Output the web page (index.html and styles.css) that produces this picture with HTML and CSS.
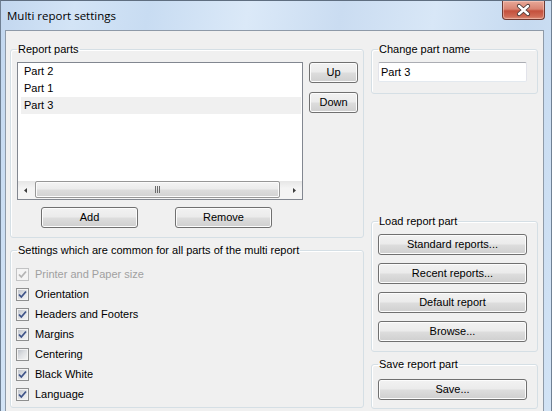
FILE: index.html
```html
<!DOCTYPE html>
<html>
<head>
<meta charset="utf-8">
<title>Multi report settings</title>
<link rel="stylesheet" href="styles.css">
</head>
<body>
<div class="window">
  <div class="titlebar">
    <span class="title">Multi report settings</span>
    <div class="close">
      <svg width="43" height="19" viewBox="0 0 43 19">
        <path d="M17 5 L26 13 M26 5 L17 13" stroke="#4a3a38" stroke-width="4.2" stroke-linecap="round" fill="none"/>
        <path d="M17 5 L26 13 M26 5 L17 13" stroke="#ffffff" stroke-width="2.4" stroke-linecap="round" fill="none"/>
      </svg>
    </div>
  </div>
  <div class="client">
    <div class="col-left">
      <fieldset class="group parts">
        <legend>Report parts</legend>
        <div class="parts-row">
          <div class="listbox">
            <div class="items">
              <div class="item">Part 2</div>
              <div class="item">Part 1</div>
              <div class="item selected">Part 3</div>
            </div>
            <div class="hscroll">
              <div class="arrow">
                <svg width="17" height="17" viewBox="0 0 17 17"><polygon points="9,6 6,8.5 9,11" fill="#3c3c3c"/></svg>
              </div>
              <div class="track">
                <div class="thumb">
                  <svg width="7" height="7" viewBox="0 0 7 7"><path d="M1.5 0 V7 M3.5 0 V7 M5.5 0 V7" stroke="#6b6b6b" stroke-width="1"/></svg>
                </div>
              </div>
              <div class="arrow">
                <svg width="17" height="17" viewBox="0 0 17 17"><polygon points="8,6 11,8.5 8,11" fill="#3c3c3c"/></svg>
              </div>
            </div>
          </div>
          <div class="updown">
            <button class="btn small">Up</button>
            <button class="btn small down">Down</button>
          </div>
        </div>
        <div class="addremove">
          <button class="btn wide">Add</button>
          <button class="btn wide">Remove</button>
        </div>
      </fieldset>

      <fieldset class="group settings">
        <legend>Settings which are common for all parts of the multi report</legend>
        <div class="check disabled">
          <span class="box"><svg width="11" height="11" viewBox="0 0 11 11"><path d="M2 5.5 L4.3 8 L9 2.5" stroke="#b4b4b4" stroke-width="1.8" fill="none"/></svg></span>
          <span class="label">Printer and Paper size</span>
        </div>
        <div class="check">
          <span class="box"><svg width="11" height="11" viewBox="0 0 11 11"><path d="M2 5.5 L4.3 8 L9 2.5" stroke="#3f5488" stroke-width="1.8" fill="none"/></svg></span>
          <span class="label">Orientation</span>
        </div>
        <div class="check">
          <span class="box"><svg width="11" height="11" viewBox="0 0 11 11"><path d="M2 5.5 L4.3 8 L9 2.5" stroke="#3f5488" stroke-width="1.8" fill="none"/></svg></span>
          <span class="label">Headers and Footers</span>
        </div>
        <div class="check">
          <span class="box"><svg width="11" height="11" viewBox="0 0 11 11"><path d="M2 5.5 L4.3 8 L9 2.5" stroke="#3f5488" stroke-width="1.8" fill="none"/></svg></span>
          <span class="label">Margins</span>
        </div>
        <div class="check">
          <span class="box"></span>
          <span class="label">Centering</span>
        </div>
        <div class="check">
          <span class="box"><svg width="11" height="11" viewBox="0 0 11 11"><path d="M2 5.5 L4.3 8 L9 2.5" stroke="#3f5488" stroke-width="1.8" fill="none"/></svg></span>
          <span class="label">Black White</span>
        </div>
        <div class="check">
          <span class="box"><svg width="11" height="11" viewBox="0 0 11 11"><path d="M2 5.5 L4.3 8 L9 2.5" stroke="#3f5488" stroke-width="1.8" fill="none"/></svg></span>
          <span class="label">Language</span>
        </div>
      </fieldset>
    </div>

    <div class="col-right">
      <fieldset class="group rename">
        <legend>Change part name</legend>
        <div class="textbox">Part 3</div>
      </fieldset>

      <fieldset class="group load">
        <legend>Load report part</legend>
        <div class="btn-stack">
          <button class="btn full">Standard reports...</button>
          <button class="btn full">Recent reports...</button>
          <button class="btn full">Default report</button>
          <button class="btn full">Browse...</button>
        </div>
      </fieldset>

      <fieldset class="group save">
        <legend>Save report part</legend>
        <button class="btn full">Save...</button>
      </fieldset>
    </div>
  </div>
</div>
</body>
</html>
```

FILE: styles.css
```css
* {
  box-sizing: border-box;
}

html, body {
  margin: 0;
  padding: 0;
}

body {
  width: 552px;
  height: 411px;
  overflow: hidden;
  background: #ffffff;
  font-family: "Liberation Sans", Arial, sans-serif;
  font-size: 11px;
  color: #000000;
}

.window {
  width: 552px;
  height: 411px;
  border-top: 1px solid #5f6e80;
  border-left: 1px solid #6f8093;
  border-right: 1px solid #6f8093;
  background: linear-gradient(100deg, #c2d7ef 0%, #d3e4f6 12%, #c8dcf2 24%, #dbe9f8 40%, #cadcf1 55%, #d8e7f7 70%, #c6daf0 85%, #d2e3f5 100%);
  display: flex;
  flex-direction: column;
}

.titlebar {
  height: 29px;
  flex: none;
  display: flex;
  align-items: flex-start;
  justify-content: space-between;
  padding: 0 6px;
}

.title {
  font-family: "Open Sans", "Liberation Sans", sans-serif;
  font-size: 11.5px;
  line-height: 16px;
  margin-top: 7px;
  color: #000000;
}

.close {
  width: 43px;
  height: 19px;
  border: 1px solid #6e3a33;
  border-top: none;
  border-radius: 0 0 4px 4px;
  background: linear-gradient(#e8a898 0%, #d98472 45%, #c4503c 55%, #cf6a55 85%, #dd8f78 100%);
  box-shadow: inset 0 0 0 1px rgba(255, 220, 210, 0.45);
  display: flex;
  align-items: center;
  justify-content: center;
  overflow: hidden;
}

.close svg {
  display: block;
  flex: none;
}

.client {
  flex: 1;
  margin: 0 7px 0 4px;
  border: 1px solid #8e9aa8;
  border-bottom: none;
  background: #f0f0f0;
  display: flex;
  gap: 7px;
  padding: 12px 5px 0 4px;
}

.col-left {
  width: 354px;
  flex: none;
  display: flex;
  flex-direction: column;
}

.col-right {
  width: 167px;
  flex: none;
  display: flex;
  flex-direction: column;
}

.group {
  margin: 0;
  min-width: 0;
  border: 1px solid #d5dfe5;
  border-radius: 3px;
  box-shadow: inset 1px 1px 0 #ffffff;
}

legend {
  padding: 0 1px;
  font-size: 11px;
  line-height: 13px;
  color: #000000;
}

/* Report parts */
.group.parts {
  padding: 6px 5px 9px 6px;
}

.parts-row {
  display: flex;
  gap: 6px;
  align-items: flex-start;
}

.listbox {
  width: 286px;
  height: 138px;
  border: 1px solid #828790;
  background: #ffffff;
  display: flex;
  flex-direction: column;
}

.items {
  flex: 1;
  padding: 0 1px 0 3px;
}

.item {
  height: 17px;
  line-height: 17px;
  padding-left: 3px;
}

.item.selected {
  background: #f0f0f0;
}

.hscroll {
  height: 18px;
  flex: none;
  display: flex;
  background: linear-gradient(#e6e6e6, #f4f4f4 40%, #f4f4f4);
}

.arrow {
  width: 17px;
  flex: none;
  display: flex;
  align-items: center;
  justify-content: center;
}

.arrow svg {
  display: block;
}

.track {
  flex: 1;
  padding: 0 5px 0 0;
  display: flex;
  align-items: stretch;
}

.thumb {
  flex: 1;
  margin: 0 0 1px 0;
  border: 1px solid #979797;
  border-radius: 2px;
  background: linear-gradient(#f4f4f4 0%, #ececec 45%, #dcdcdc 55%, #d2d2d2 100%);
  box-shadow: inset 0 0 0 1px #fbfbfb;
  display: flex;
  align-items: center;
  justify-content: center;
}

.thumb svg {
  display: block;
}

.updown {
  display: flex;
  flex-direction: column;
  gap: 9px;
}

.btn {
  font-family: "Liberation Sans", Arial, sans-serif;
  font-size: 11px;
  font-weight: normal;
  color: #000000;
  height: 21px;
  padding: 0;
  margin: 0;
  border: 1px solid #707070;
  border-radius: 3px;
  background: linear-gradient(#f2f2f2 0%, #ebebeb 48%, #dddddd 52%, #cfcfcf 100%);
  box-shadow: inset 0 0 0 1px #fcfcfc;
  line-height: 19px;
  text-align: center;
}

.btn.small {
  width: 49px;
}

.btn.wide {
  width: 97px;
}

.btn.full {
  width: 149px;
}

.addremove {
  display: flex;
  gap: 37px;
  margin-top: 7px;
  padding-left: 24px;
}

/* Settings */
.group.settings {
  margin-top: 6px;
  padding: 7px 5px 3px 5px;
}

.settings legend {
  margin-left: 1px;
}

.check {
  height: 20px;
  display: flex;
  align-items: center;
  gap: 6px;
}

.box {
  width: 13px;
  height: 13px;
  flex: none;
  border: 1px solid #8e8f8f;
  background: linear-gradient(135deg, #b9bec6 0%, #dfe1e4 50%, #f7f7f7 100%);
  box-shadow: inset 0 0 0 1px #f4f4f4;
  display: flex;
  align-items: center;
  justify-content: center;
}

.box svg {
  display: block;
}

.check.disabled .box {
  border-color: #c2c3c4;
  background: #f4f4f4;
  box-shadow: none;
}

.check.disabled .label {
  color: #a0a0a0;
}

.label {
  line-height: 14px;
}

/* Right column */
.group.rename {
  padding: 6px 10px 11px 6px;
}

.textbox {
  width: 149px;
  height: 20px;
  background: #ffffff;
  border: 1px solid #e2e3ea;
  border-top-color: #abadb3;
  border-bottom-color: #e3e9ef;
  border-radius: 2px;
  padding-left: 2px;
  line-height: 18px;
}

.group.load {
  margin-top: 121px;
  padding: 6px 10px 9px 6px;
}

.btn-stack {
  display: flex;
  flex-direction: column;
  gap: 8px;
}

.group.save {
  margin-top: 6px;
  padding: 8px 10px 8px 6px;
}
```
